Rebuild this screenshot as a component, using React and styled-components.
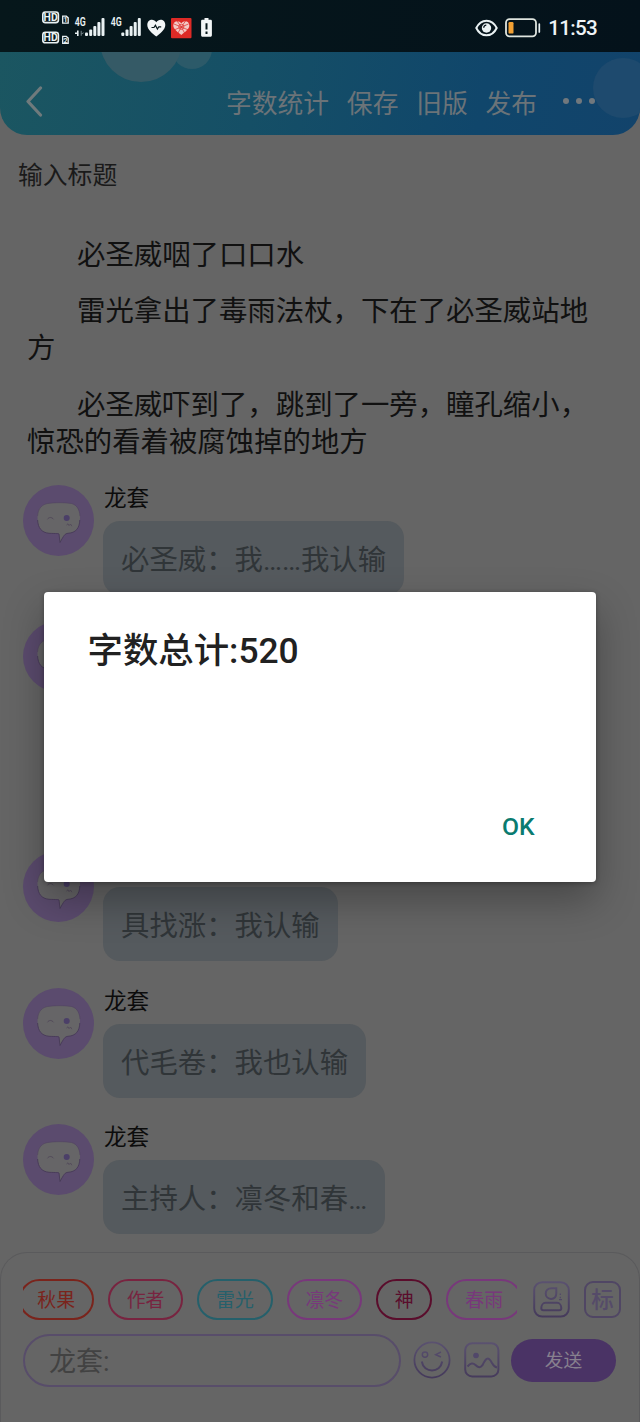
import styled, { createGlobalStyle } from "styled-components"

const GlobalStyle = createGlobalStyle`
    * {
        box-sizing: border-box;
    }
    body {
        margin: 0;
        background-color: #656565;
        font-family: Roboto, "Noto Sans CJK SC", sans-serif;
    }
`

const Screen = styled.div`
    position: relative;
    width: 640px;
    height: 1422px;
    display: flex;
    flex-direction: column;
    overflow: hidden;
    background-color: #656565;
`

const StatusBar = styled.div`
    height: 52px;
    flex: none;
    display: flex;
    align-items: flex-start;
    justify-content: space-between;
    padding: 8px 43px 0 40px;
    background: linear-gradient(90deg, #06171b, #04121b);
`
const StatusRight = styled.div`
    display: flex;
    align-items: center;
    height: 40px;
    gap: 7px;
`
const Clock = styled.span`
    font-size: 20.6px;
    font-weight: 500;
    letter-spacing: -0.7px;
    line-height: 40px;
    color: #eef3f6;
`

const Header = styled.header`
    position: relative;
    z-index: 0;
    height: 83px;
    flex: none;
    display: flex;
    align-items: center;
    padding: 15px 45px 0 24px;
    border-radius: 0 0 27px 27px;
    overflow: hidden;
    background: linear-gradient(100deg, #1b5661 0%, #154f66 40%, #10466b 75%, #12436b 100%);
`
const Bubbles = styled.svg`
    position: absolute;
    inset: 0;
    z-index: -1;
`
const Menu = styled.nav`
    margin-left: auto;
    padding-top: 6px;
    display: flex;
    gap: 17.7px;
    font-size: 25.8px;
    line-height: 36px;
    color: #6b7378;
`
const Dots = styled.div`
    display: flex;
    gap: 6.7px;
    margin-left: 26px;

    i {
        width: 6.2px;
        height: 6.2px;
        border-radius: 50%;
        background-color: #71787d;
    }
`

const Title = styled.div`
    margin: 23px 0 0 18px;
    height: 36px;
    flex: none;
    font-size: 24.8px;
    line-height: 36px;
    color: #1a1a1a;
`

const Story = styled.div`
    margin-top: 43px;
    padding: 0 24px 0 27px;
    display: flex;
    flex-direction: column;
    gap: 19.3px;
    font-size: 28.4px;
    line-height: 37px;
    color: #111;

    p {
        margin: 0;
        text-indent: 50px;
    }
`

const ChatList = styled.div`
    margin-top: 24.4px;
    padding-left: 23px;
`
const ChatRow = styled.div`
    display: flex;
    align-items: flex-start;
    gap: 9px;
    height: 110px;
    margin-bottom: ${props => props.$gap ? props.$gap : "26.3px"};

    &:last-child {
        margin-bottom: 0;
    }
`
const ChatBody = styled.div`
    display: flex;
    flex-direction: column;
    align-items: flex-start;
`
const ChatName = styled.div`
    height: 36px;
    padding: 2px 0 0 1px;
    font-size: 22.6px;
    line-height: 23px;
    color: #0c0c0c;
`
const ChatBubble = styled.div`
    height: 74px;
    padding: 3px 18px 0;
    border-radius: 17px;
    font-size: 28.4px;
    line-height: 74px;
    white-space: nowrap;
    background-color: #555a5e;
    color: #303538;
`

const Composer = styled.div`
    height: 170px;
    flex: none;
    margin-top: auto;
    padding: 25.5px 18px 0 22px;
    border: 1px solid #5a5a5c;
    border-bottom: none;
    border-radius: 27px 27px 0 0;
`
const TagLine = styled.div`
    display: flex;
    align-items: center;
    justify-content: space-between;
    height: 41px;
`
const TagScroller = styled.div`
    width: 493.5px;
    display: flex;
    gap: 14px;
    overflow: hidden;
`
const Tag = styled.span`
    flex: none;
    height: 41px;
    padding: 0 16.8px;
    border: 2px solid ${props => props.$color};
    border-radius: 21px;
    font-size: 18.9px;
    line-height: 40px;
    color: ${props => props.$color};

    &:first-child {
        margin-left: -4.5px;
    }
`
const TagButtons = styled.div`
    display: flex;
    gap: 14px;
`
const InputLine = styled.div`
    display: flex;
    align-items: center;
    height: 53px;
    margin-top: 14px;
`
const Field = styled.div`
    width: 378px;
    height: 53px;
    padding-left: 24px;
    border: 2px solid #584d6a;
    border-radius: 27px;
    font-size: 27px;
    line-height: 53px;
    color: #424242;
`
const SendButton = styled.button`
    width: 105px;
    height: 43px;
    margin-left: 11px;
    padding: 2px 0 0;
    border: none;
    border-radius: 22px;
    font-family: inherit;
    font-size: 18.7px;
    line-height: 41px;
    color: #87808e;
    background-color: #4a3365;
`
const ToolIcon = styled.svg`
    flex: none;
    margin-left: ${props => props.$left ? props.$left : "0"};
`

const DialogLayer = styled.div`
    position: absolute;
    inset: 0;
    display: flex;
    align-items: flex-start;
    padding: 592px 0 0 44px;
`
const Dialog = styled.div`
    width: 551.5px;
    height: 289.5px;
    display: flex;
    flex-direction: column;
    justify-content: space-between;
    padding: 35px 61px 35px 43.5px;
    border-radius: 4px;
    background-color: #fff;
    box-shadow: 0 18px 40px rgba(0, 0, 0, 0.3), 0 1px 5px rgba(0, 0, 0, 0.3);
`
const DialogTitle = styled.h2`
    margin: 0;
    font-size: 35.4px;
    font-weight: 500;
    line-height: 48px;
    color: #212121;
`
const DialogAction = styled.button`
    align-self: flex-end;
    padding: 0;
    border: none;
    background: none;
    font-family: inherit;
    font-size: 24.7px;
    font-weight: 500;
    line-height: 40px;
    color: #0a7b70;
`

const story = [
    "必圣威咽了口口水",
    "雷光拿出了毒雨法杖，下在了必圣威站地方",
    "必圣威吓到了，跳到了一旁，瞳孔缩小，惊恐的看着被腐蚀掉的地方",
]

const chats = [
    { id: 1, name: "龙套", text: "必圣威：我……我认输" },
    { id: 2, gap: "120px" },
    { id: 3, text: "具找涨：我认输" },
    { id: 4, name: "龙套", text: "代毛卷：我也认输" },
    { id: 5, name: "龙套", text: "主持人：凛冬和春…" },
]

const tags = [
    { name: "秋果", color: "#7a241c" },
    { name: "作者", color: "#782440" },
    { name: "雷光", color: "#25606b" },
    { name: "凛冬", color: "#78387b" },
    { name: "神", color: "#5a0d2c" },
    { name: "春雨", color: "#78387b" },
]

const Signal = ({ x }) => (
    <g fill="#e9f1f3">
        <rect x={x} y="24.5" width="3" height="3.5" rx="1" />
        <rect x={x + 4.2} y="21.5" width="3" height="6.5" rx="1" />
        <rect x={x + 8.3} y="18" width="3" height="10" rx="1" />
        <rect x={x + 12.4} y="14" width="3" height="14" rx="1" />
        <rect x={x + 16.5} y="10" width="3" height="18" rx="1" />
    </g>
)

const HdBadge = ({ y, sim }) => (
    <g fontFamily="Roboto" fontWeight="700" textAnchor="middle" fill="#e9f1f3">
        <rect x="2.8" y={y + 0.8} width="15.6" height="10.6" rx="2.6" fill="none" stroke="#e9f1f3" strokeWidth="1.6" />
        <text x="10.6" y={y + 9.9} fontSize="10.4">HD</text>
        <path d={`M22.7 ${y + 5}h3.6l1.900 1.700v5.300h-5.500z`} fill="none" stroke="#e9f1f3" strokeWidth="1.300" />
        <text x="25.500" y={y + 11.2} fontSize="7">{sim}</text>
    </g>
)

const StatusIcons = () => (
    <svg width="176" height="40" viewBox="0 0 176 40">
        <HdBadge y={3.2} sim="1" />
        <HdBadge y={23.4} sim="2" />
        <g fontFamily="Roboto" fontWeight="600" fill="#e9f1f3">
            <text x="34.8" y="18.4" fontSize="12" textLength="11" lengthAdjust="spacingAndGlyphs">4G</text>
            <text x="70.8" y="18.4" fontSize="12" textLength="11" lengthAdjust="spacingAndGlyphs">4G</text>
        </g>
        <path d="M35 25.200h2.800M37.800 22.600v5.400" fill="none" stroke="#e9f1f3" strokeWidth="1.600" />
        <path d="M41.200 22.800v5M41.200 26l2.400-1.200" fill="none" stroke="#77868b" strokeWidth="1" />
        <Signal x={45} />
        <Signal x={81.3} />
        <path d="M116.3 28.6c-3.4-3-9-6.700-9-11.600 0-6.300 6.800-6.700 9-2.700 2.200-4 9-3.600 9 2.700 0 4.900-5.600 8.600-9 11.600z" fill="#f2f6f7" />
        <path d="M111.500 19.500h2.500l1.400-2.200 2 3.700 1.400-2.200h2.400" fill="none" stroke="#06171b" strokeWidth="1.200" />
        <rect x="131" y="10" width="20.500" height="20.200" rx="1" fill="#dd2a26" />
        <path d="M141.300 27c-2.800-2.600-8-5.600-8-9.500 0-5.200 5.800-5.400 8-2.200 2.200-3.200 8-3 8 2.200 0 3.900-5.200 6.900-8 9.500z" fill="#f2c9c5" />
        <g fill="none" stroke="#dd2a26" strokeWidth="0.7">
            <circle cx="141.300" cy="18.800" r="2.600" />
            <path d="M134 16l14.500 6M148.500 16l-14.500 6M137 13l4.300 5.800 4.300-5.800M138 25l3.300-6 3.300 6" />
        </g>
        <path d="M164.500 10h4v1.700h1.900c.9 0 1.500.5 1.500 1.400v14.200c0 .9-.6 1.500-1.500 1.500h-7.800c-.9 0-1.500-.6-1.500-1.500V13.100c0-.9.6-1.400 1.500-1.400h1.900z" fill="#f2f6f7" />
        <path d="M166.500 15.200v6.300M166.500 23.600v2.300" stroke="#06171b" strokeWidth="2" />
    </svg>
)

const EyeIcon = () => (
    <svg width="23" height="18" viewBox="0 0 23 18">
        <path d="M1.300 9C6 -.8 17 -.8 21.700 9 17 18.800 6 18.800 1.300 9z" fill="none" stroke="#e9f1f3" strokeWidth="2" />
        <circle cx="11.500" cy="9" r="4.700" fill="#e9f1f3" />
        <path d="M8.700 8.800a2.800 2.800 0 0 1 2.600-2.600" fill="none" stroke="#04121b" strokeWidth="1.300" />
    </svg>
)

const BatteryIcon = () => (
    <svg width="36" height="20" viewBox="0 0 36 20">
        <rect x="1" y="1.200" width="30" height="17.200" rx="3.600" fill="none" stroke="#dfe5df" strokeWidth="1.800" />
        <rect x="3.500" y="4" width="5" height="11.600" rx="1.200" fill="#f2a033" />
        <path d="M34.300 6v8" stroke="#e9f1f3" strokeWidth="1.700" strokeLinecap="round" />
    </svg>
)

const Avatar = () => (
    <svg width="71" height="71" viewBox="0 0 71 71">
        <circle cx="35.500" cy="35.500" r="35.500" fill="#5b4b6e" />
        <path d="M27 18.200C32 17.500 41 17.500 46 18.200C53 18.500 57 24 57 32.500C57 42 54 47.500 45 48.200C42 48.500 41 50 37 57.500L36 49C35.500 48 34 48.500 26 48.200C18 47.500 14.500 42 14.500 33C14.500 24 18 18.700 27 18.200Z" fill="#666567" />
        <path d="M56.800 35C56.500 43 53 47.800 45 48.300C42 48.600 41 50 37 57.500L36 49C35.500 48.300 34 48.700 26 48.300C18.500 47.500 15 43 14.600 35" fill="none" stroke="#473a58" strokeWidth="0.900" />
        <path d="M14.600 31C15 23.500 19 18.700 27 18.200C32 17.500 41 17.500 46 18.200C53 18.500 56.500 23.500 57 31" fill="none" stroke="#504360" strokeWidth="0.600" />
        <path d="M24.500 34.300c1.300-2.400 4.300-2.400 6 0" fill="none" stroke="#524a5a" strokeWidth="1" />
        <circle cx="43.700" cy="33" r="3" fill="#4b3f68" />
        <path d="M43.500 40l1.500-1.200 1 1.800 1.500-1.600 1.300 2.200" fill="none" stroke="#524a5a" strokeWidth="0.900" />
    </svg>
)

// shared vertical fade used by the outlined tool icons
const IconFade = () => (
    <defs>
        <linearGradient id="fade" gradientUnits="userSpaceOnUse" x1="0" y1="0" x2="0" y2="38">
            <stop offset="0" stopColor="#5b5270" />
            <stop offset="1" stopColor="#44395a" />
        </linearGradient>
    </defs>
)

const PersonIcon = () => (
    <ToolIcon width="37" height="37" viewBox="0 0 37 37" fill="none" stroke="url(#fade)" strokeWidth="2">
        <IconFade />
        <rect x="1.200" y="1.200" width="34.600" height="34.400" rx="8" />
        <path d="M23.300 7.300h-4.800c-3.600 0-5.800 2-5.800 5.200 0 3.200 2.300 5.400 5.300 5.400 3.300 0 5.300-2.300 5.300-5.600z" />
        <path d="M12.500 21.800h11.600c2.600 0 4.200 2.700 4.200 5.400 0 1.300-.8 2-2 2H10.300c-1.200 0-2-.7-2-2 0-2.700 1.600-5.400 4.200-5.400z" />
        <path d="M27.300 12.500v1.500M27.300 15.800v1.400M26 18.600h3" strokeWidth="1.300" />
    </ToolIcon>
)

const LabelBox = styled.div`
    width: 37px;
    height: 37px;
    border: 2px solid #504664;
    border-radius: 9px;
    text-align: center;
    font-size: 22.5px;
    font-weight: 500;
    line-height: 35px;
    color: #554b69;
`

const SmileIcon = () => (
    <ToolIcon $left="12px" width="38" height="38" viewBox="0 0 38 38" fill="none" stroke="url(#fade)" strokeWidth="1.800">
        <circle cx="19" cy="19" r="17.600" />
        <circle cx="12" cy="13.600" r="2.700" strokeWidth="1.500" />
        <path d="M28 11l-5.300 2.600 5.300 2.400" strokeWidth="1.500" />
        <path d="M8.800 20.500c1.800 12 18.600 12 20.400 0" strokeWidth="2" />
    </ToolIcon>
)

const ImageIcon = () => (
    <ToolIcon $left="13px" width="36" height="36" viewBox="0 0 36 36" fill="none" stroke="url(#fade)" strokeWidth="2">
        <rect x="1.200" y="1.200" width="33.200" height="33.200" rx="7" />
        <circle cx="12" cy="13.500" r="2.800" fill="#51476a" stroke="none" />
        <path d="M3.500 24.500c3-3.500 5.500-4 8-1.500 2.500 2.700 5 3 7 .2 2.600-5.500 5.500-10.500 9.500-2.200 1.500 2.700 2.700 4 5 4.500" />
    </ToolIcon>
)

const App = () => {
    return (
        <Screen>
            <GlobalStyle />
            <StatusBar>
                <StatusIcons />
                <StatusRight>
                    <EyeIcon />
                    <BatteryIcon />
                    <Clock>11:53</Clock>
                </StatusRight>
            </StatusBar>

            <Header>
                <Bubbles width="640" height="83" viewBox="0 52 640 83">
                    <circle cx="192" cy="49" r="20" fill="#2c5a69" />
                    <circle cx="141" cy="41" r="41" fill="#355a66" />
                    <circle cx="623" cy="88" r="30" fill="#1e4a6e" />
                </Bubbles>
                <svg width="20" height="32" viewBox="0 0 20 32">
                    <path d="M16.500 3L4 16.500 16.500 30" fill="none" stroke="#6f7a7c" strokeWidth="3.200" strokeLinecap="round" strokeLinejoin="round" />
                </svg>
                <Menu>
                    <span>字数统计</span>
                    <span>保存</span>
                    <span>旧版</span>
                    <span>发布</span>
                </Menu>
                <Dots><i /><i /><i /></Dots>
            </Header>

            <Title>输入标题</Title>

            <Story>
                {story.map(line => <p key={line}>{line}</p>)}
            </Story>

            <ChatList>
                {chats.map(chat => (
                    <ChatRow key={chat.id} $gap={chat.gap}>
                        <Avatar />
                        <ChatBody>
                            <ChatName>{chat.name}</ChatName>
                            {chat.text && <ChatBubble>{chat.text}</ChatBubble>}
                        </ChatBody>
                    </ChatRow>
                ))}
            </ChatList>

            <Composer>
                <TagLine>
                    <TagScroller>
                        {tags.map(tag => <Tag key={tag.name} $color={tag.color}>{tag.name}</Tag>)}
                    </TagScroller>
                    <TagButtons>
                        <PersonIcon />
                        <LabelBox>标</LabelBox>
                    </TagButtons>
                </TagLine>
                <InputLine>
                    <Field>龙套:</Field>
                    <SmileIcon />
                    <ImageIcon />
                    <SendButton>发送</SendButton>
                </InputLine>
            </Composer>

            <DialogLayer>
                <Dialog>
                    <DialogTitle>字数总计:520</DialogTitle>
                    <DialogAction>OK</DialogAction>
                </Dialog>
            </DialogLayer>
        </Screen>
    )
}

export default App
